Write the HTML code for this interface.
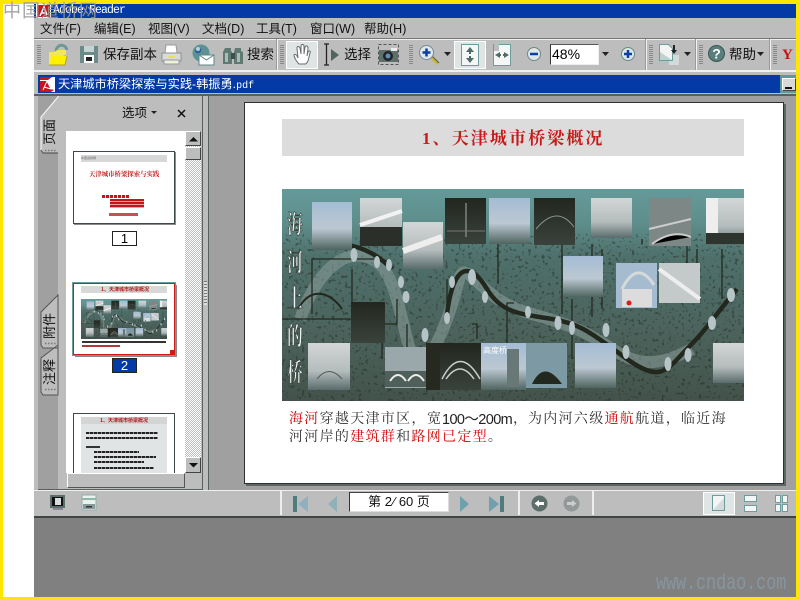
<!DOCTYPE html>
<html lang="zh"><head><meta charset="utf-8"><title>Adobe Reader</title>
<style>
html,body{margin:0;padding:0;width:800px;height:600px;overflow:hidden;background:#fff}
body{position:relative;font-family:"Liberation Sans","WenQuanYi Zen Hei","Noto Sans CJK SC",sans-serif;font-size:13px;color:#000}
div,span{position:absolute;white-space:nowrap;box-sizing:border-box}
.m{top:21px;font-size:12.5px;line-height:16px;color:#111}
.t{font-size:13.5px;line-height:16px;color:#111}
.g{width:4px;background:repeating-linear-gradient(#888 0 1px,#bdbdbd 1px 2px)}
.s{width:2px;background:#f2f2f2;border-left:1px solid #9a9a9a}
.b{background:#dfe4e4;border:1px solid #fff}
.c{font-family:"Liberation Serif","Noto Serif CJK SC",serif;font-size:14px;line-height:18px;letter-spacing:1.3px;color:#333}
.c b{font-weight:400;color:#d00000}
.v{left:42px;width:16px;writing-mode:vertical-rl;text-orientation:sideways;transform:rotate(180deg);font-size:13px;line-height:16px;color:#111}
svg{position:absolute;overflow:visible}
</style></head><body>
<!-- frame -->
<div style="left:34px;top:3px;width:763px;height:595px;background:#808080"></div>
<div style="left:34px;top:4px;width:762px;height:14px;background:#033aa5"></div>
<div style="left:34px;top:18px;width:762px;height:20px;background:#bdbdbd"></div>
<div style="left:34px;top:38px;width:762px;height:1px;background:#777"></div>
<div style="left:34px;top:39px;width:762px;height:1px;background:#eee"></div>
<div style="left:34px;top:40px;width:762px;height:30px;background:#bdbdbd"></div>
<div style="left:34px;top:70px;width:762px;height:2px;background:#f0f0f0"></div>
<div style="left:34px;top:72px;width:762px;height:24px;background:#bdbdbd"></div>
<div style="left:38px;top:75px;width:742px;height:18px;background:#033aa5"></div>
<div style="left:780px;top:75px;width:16px;height:18px;background:#5f9a9a"></div>
<div style="left:782px;top:78px;width:14px;height:13px;background:#d8d8d8;border:1px solid #fff;border-right-color:#444;border-bottom-color:#444"></div>
<div style="left:785px;top:87px;width:7px;height:2px;background:#111"></div>
<div style="left:34px;top:94px;width:762px;height:2px;background:#59615c"></div>
<!-- yellow edges -->
<div style="left:0;top:0;width:800px;height:4px;background:#ffe600"></div>
<div style="left:0;top:0;width:3px;height:600px;background:#ffe600"></div>
<div style="left:796px;top:0;width:4px;height:600px;background:#ffe600"></div>
<div style="left:0;top:597px;width:800px;height:3px;background:#ffe600"></div>
<!-- title -->
<svg style="left:36px;top:4px" width="15" height="14"><rect width="15" height="14" fill="#fff"/><path d="M1 1h13v12H1z" fill="#c8141e"/><path d="M4 12L8 3l3 8M5 9h5" stroke="#fff" stroke-width="1.5" fill="none"/></svg>
<div style="left:53px;top:3px;font:11.5px/16px 'Liberation Mono',monospace;color:#fff;letter-spacing:-.9px">Adobe Reader</div>
<div style="left:3px;top:0;font-size:18px;line-height:22px;color:#9a9a9a;letter-spacing:1px;opacity:.9">中国道桥网</div>
<!-- menu -->
<div class="m" style="left:40px">文件(F)</div><div class="m" style="left:94px">编辑(E)</div><div class="m" style="left:148px">视图(V)</div><div class="m" style="left:202px">文档(D)</div><div class="m" style="left:256px">工具(T)</div><div class="m" style="left:310px">窗口(W)</div><div class="m" style="left:364px">帮助(H)</div>
<!-- toolbar -->
<div class="g" style="left:37px;top:45px;height:19px"></div>
<div class="g" style="left:280px;top:45px;height:19px"></div>
<div class="g" style="left:409px;top:45px;height:19px"></div>
<div class="g" style="left:649px;top:45px;height:19px"></div>
<div class="g" style="left:699px;top:45px;height:19px"></div>
<div class="s" style="left:276px;top:39px;height:31px"></div>
<div class="s" style="left:645px;top:39px;height:31px"></div>
<div class="s" style="left:695px;top:39px;height:31px"></div>
<div class="s" style="left:769px;top:39px;height:31px"></div>
<!-- folder -->
<svg style="left:48px;top:43px" width="22" height="23"><path d="M8 8C9 1 17 0 19 7" stroke="#6f9797" stroke-width="3" fill="none"/><path d="M1 22V9h6l2-2h9v4L1 22z" fill="#f3e65a"/><path d="M1 22l3-9h15l-2 9z" fill="#fff000"/><path d="M1 22h16l2-9" fill="none" stroke="#b0a030"/></svg>
<!-- floppy -->
<svg style="left:80px;top:45px" width="19" height="19"><path d="M0 1h18v17H0z" fill="#6b8a8a"/><rect x="4" y="1" width="10" height="6" fill="#c6d3d3"/><rect x="4" y="10" width="10" height="8" fill="#fff"/><rect x="6" y="12" width="6" height="4" fill="#222"/></svg>
<div class="t" style="left:103px;top:47px">保存副本</div>
<!-- printer -->
<svg style="left:161px;top:44px" width="21" height="21"><path d="M5 1h10l1 8H4z" fill="#fff" stroke="#999"/><path d="M1 9h19v8H1z" fill="#d8dcdc" stroke="#8a9090"/><rect x="3" y="16" width="15" height="4" fill="#eee" stroke="#999"/><rect x="7" y="12" width="7" height="2" fill="#e8e060"/></svg>
<!-- globe mail -->
<svg style="left:192px;top:44px" width="22" height="22"><circle cx="9" cy="9" r="8.500" fill="#5c9292"/><path d="M3 6c3-4 7-2 6 1s-5 3-6 0z" fill="#2a5ca8"/><circle cx="6" cy="5" r="2" fill="#b8d2d2"/><path d="M7 11h15v10H7z" fill="#fff" stroke="#5d8a8a"/><path d="M7 11l7.500 5 7.500-5" fill="none" stroke="#5d8a8a"/></svg>
<!-- binoculars -->
<svg style="left:223px;top:45px" width="20" height="20"><path d="M2 3h6v3l1 1v12H0V7z" fill="#5f7a72"/><path d="M12 3h6v3l2 1v12H11V7z" fill="#5f7a72"/><rect x="8" y="8" width="4" height="6" fill="#3c4f49"/><rect x="2" y="8" width="3" height="9" fill="#a9bcb8"/><rect x="14" y="8" width="3" height="9" fill="#a9bcb8"/></svg>
<div class="t" style="left:247px;top:47px">搜索</div>
<!-- hand -->
<div class="b" style="left:286px;top:41px;width:32px;height:28px"></div>
<svg style="left:293px;top:44px" width="19" height="23"><path d="M6 20C3 17 1 13 1 11c0-1 2-1 3 1l1 2-1-10c0-2 2-2 3 0l1 6 0-8c0-2 3-2 3 0v8l1-7c1-2 3-1 3 1l-1 8 1-4c1-2 3-1 2 1l-2 8c-1 2-2 3-3 3z" fill="#fff" stroke="#6a6f6d"/></svg>
<!-- select -->
<svg style="left:322px;top:43px" width="20" height="24"><path d="M2 1h5M2 22h5M4.500 1v21" stroke="#222" stroke-width="1.300" fill="none"/><path d="M9 6l8 6-8 6z" fill="#4e6660"/></svg>
<div class="t" style="left:344px;top:47px">选择</div>
<!-- camera -->
<svg style="left:378px;top:44px" width="21" height="21"><rect x=".5" y=".5" width="20" height="20" fill="none" stroke="#555" stroke-dasharray="3 2"/><rect x="1" y="6" width="19" height="12" fill="#5b6f6c"/><rect x="13" y="4" width="6" height="3" fill="#eee"/><circle cx="10" cy="12" r="5" fill="#222"/><circle cx="10" cy="12" r="2.500" fill="#5f8fb8"/></svg>
<!-- zoom -->
<svg style="left:419px;top:45px" width="21" height="21"><path d="M11 11l8 8" stroke="#c8b830" stroke-width="3"/><path d="M11 11l8 8" stroke="#555" stroke-width="1" transform="translate(1 -1)"/><circle cx="7.500" cy="7.500" r="7" fill="#dfe8e8" stroke="#789"/><path d="M3.500 7.500h8M7.500 3.500v8" stroke="#0a3fa8" stroke-width="2.500"/></svg>
<svg style="left:444px;top:52px" width="7" height="5"><path d="M0 0h7L3.500 4z" fill="#222"/></svg>
<div class="b" style="left:454px;top:41px;width:32px;height:28px"></div>
<svg style="left:461px;top:44px" width="18" height="22"><path d="M.5.500h17v21H.5z" fill="#f5f7f7" stroke="#6e9c9c"/><path d="M9 3l-4 5h3v2h2V8h3zM9 19l-4-5h3v-2h2v2h3z" fill="#4f6d66"/></svg>
<svg style="left:493px;top:44px" width="18" height="22"><path d="M.5.500h17v21H.5z" fill="#f5f7f7" stroke="#6e9c9c"/><path d="M1 0h5v7H1z" fill="#bdbdbd"/><path d="M2 11l5-3v2h1v2H7v2zM16 11l-5-3v2h-1v2h1v2z" fill="#4f6d66"/></svg>
<svg style="left:527px;top:47px" width="14" height="14"><circle cx="7" cy="7" r="6.500" fill="#dfe6e6" stroke="#6b8a8a"/><path d="M3 7h8" stroke="#0a3fa8" stroke-width="2.500"/></svg>
<div style="left:550px;top:44px;width:49px;height:21px;background:#fff;border:1px solid;border-color:#555 #eee #eee #333;font:14px/19px 'Liberation Sans',sans-serif;padding-left:1px">48%</div>
<svg style="left:602px;top:52px" width="7" height="5"><path d="M0 0h7L3.500 4z" fill="#222"/></svg>
<svg style="left:621px;top:47px" width="14" height="14"><circle cx="7" cy="7" r="6.500" fill="#dfe6e6" stroke="#6b8a8a"/><path d="M3 7h8M7 3v8" stroke="#0a3fa8" stroke-width="2.500"/></svg>
<svg style="left:659px;top:44px" width="22" height="22"><rect x="10" y="11" width="10" height="10" fill="#d4d9d9"/><path d="M.5.500h9l4 4v12H.5z" fill="#f2f4f4" stroke="#6e9c9c"/><path d="M1 8l12 8H1z" fill="#c5cfcf"/><path d="M14 1h2v5h2l-3 4-3-4h2z" fill="#222"/></svg>
<svg style="left:684px;top:52px" width="7" height="5"><path d="M0 0h7L3.500 4z" fill="#222"/></svg>
<svg style="left:708px;top:45px" width="17" height="17"><circle cx="8.500" cy="8.500" r="8" fill="#587f7b" stroke="#3c5552"/><text x="8.500" y="13.500" text-anchor="middle" font-family="Liberation Sans" font-weight="700" font-size="14" fill="#fff">?</text></svg>
<div class="t" style="left:729px;top:47px">帮助</div>
<svg style="left:757px;top:52px" width="7" height="5"><path d="M0 0h7L3.500 4z" fill="#222"/></svg>
<div class="g" style="left:773px;top:45px;height:19px"></div>
<div style="left:782px;top:46px;font:700 15px/18px 'Liberation Serif',serif;color:#d01010">Y</div>
<!-- doc tab -->
<svg style="left:40px;top:77px" width="15" height="15"><rect width="15" height="15" fill="#fff"/><path d="M0 0h12l-4 3H0zM0 4h7l4 8 3 1-3 2H0z" fill="#c8141e"/><path d="M3 13L7 4l4 8-7-2" stroke="#fff" fill="none"/></svg>
<div style="left:58px;top:76px;color:#fff;font-size:12.2px;line-height:16px">天津城市桥梁探索与实践-韩振勇.<span style="position:static;font:10px/16px 'Liberation Mono',monospace">pdf</span></div>
<!-- left side -->
<div style="left:34px;top:96px;width:762px;height:394px;background:#bdbdbd"></div>
<div style="left:38px;top:96px;width:20px;height:394px;background:#a0a0a0"></div>
<div style="left:202px;top:96px;width:1px;height:394px;background:#59615c"></div>
<div style="left:38px;top:489px;width:165px;height:1px;background:#59615c"></div>
<div style="left:208px;top:96px;width:588px;height:394px;background:#a0a0a0;border-left:1px solid #59615c"></div>
<svg style="left:38px;top:96px" width="21" height="310">
<path d="M20 0v1L3 21v33l2 3h15" fill="#bdbdbd" stroke="#fff"/><path d="M3 54l2 3h15" stroke="#444" fill="none"/>
<path d="M20 199L3 216v33l2 3h15zM20 249L3 262v34l2 3h15z" fill="#bdbdbd" stroke="#555"/>
<path d="M7 54.500h12M7 247.500h12M7 293.500h12" stroke="#777" stroke-width="1.500" stroke-dasharray="1.500 1.500"/>
</svg>
<div class="v" style="top:119px;height:26px">页面</div>
<div class="v" style="top:312px;height:27px">附件</div>
<div class="v" style="top:358px;height:27px">注释</div>
<div class="t" style="left:122px;top:105px;font-size:12.5px">选项</div>
<svg style="left:151px;top:111px" width="6" height="4"><path d="M0 0h6L3 3z" fill="#222"/></svg>
<svg style="left:177px;top:109px" width="9" height="9"><path d="M1 1l7 7M8 1L1 8" stroke="#111" stroke-width="1.500"/></svg>
<!-- thumbs -->
<div style="left:66px;top:131px;width:119px;height:342px;background:#fff;overflow:hidden">
  <div style="left:7px;top:20px;width:102px;height:73px;background:#fff;border:1px solid #3d4a46;box-shadow:1px 1px 0 #8a8a8a">
    <div style="left:7px;top:3px;width:86px;height:7px;background:#d8d8d8;font-size:3px;line-height:7px;color:#666">中国道桥网</div>
    <div style="left:15px;top:17px;font:700 6.400px/9px 'Noto Serif CJK SC',serif;color:#c01818">天津城市桥梁探索与实践</div>
    <div style="left:28px;top:43px;width:27px;height:3px;background:repeating-linear-gradient(90deg,#c01818 0 3px,#fff 3px 4px)"></div>
    <div style="left:36px;top:47px;width:34px;height:9px;background:repeating-linear-gradient(#c01818 0 2px,#e9a0a0 2px 3px)"></div>
    <div style="left:35px;top:61px;width:29px;height:3px;background:#c85050"></div>
  </div>
  <div style="left:46px;top:100px;width:25px;height:15px;border:1px solid #222;text-align:center;font:13px/13px 'Liberation Sans',sans-serif">1</div>
  <div style="left:7px;top:152px;width:102px;height:72px;background:#fff;border:1px solid #d01818;outline:1px solid #6e9c9c;box-shadow:2px 2px 0 #8a8a8a">
    <div style="left:7px;top:2px;width:86px;height:7px;background:#d8d8d8"></div>
    <div style="left:27px;top:2px;font:700 5px/7px 'Noto Sans CJK SC',sans-serif;color:#b01818">1、天津城市桥梁概况</div>
    <svg style="left:7px;top:15px" width="86" height="40" viewBox="0 0 462 212" preserveAspectRatio="none"><use href="#bridge"/></svg>
    <div style="left:8px;top:57px;width:84px;height:2px;background:#333"></div>
    <div style="left:8px;top:61px;width:38px;height:2px;background:#b03838"></div>
    <div style="right:0;bottom:0;width:4px;height:4px;background:#d01818"></div>
  </div>
  <div style="left:46px;top:227px;width:25px;height:15px;border:1px solid #222;background:#033aa5;color:#fff;text-align:center;font:13px/13px 'Liberation Sans',sans-serif">2</div>
  <div style="left:7px;top:282px;width:102px;height:73px;background:#fff;border:1px solid #3d4a46">
    <div style="left:7px;top:3px;width:86px;height:60px;background:#e0e4e4"></div>
    <div style="left:7px;top:3px;width:86px;height:7px;background:#d4d4d4"></div>
    <div style="left:26px;top:3px;font:700 5px/7px 'Noto Sans CJK SC',sans-serif;color:#b01818">1、天津城市桥梁概况</div>
    <div style="left:12px;top:18px;width:72px;height:2px;background:repeating-linear-gradient(90deg,#222 0 3px,#888 3px 4px)"></div>
    <div style="left:12px;top:23px;width:72px;height:2px;background:repeating-linear-gradient(90deg,#222 0 3px,#888 3px 4px)"></div>
    <div style="left:12px;top:32px;width:14px;height:2px;background:#333"></div>
    <div style="left:20px;top:37px;width:45px;height:2px;background:repeating-linear-gradient(90deg,#222 0 3px,#888 3px 4px)"></div>
    <div style="left:20px;top:42px;width:62px;height:2px;background:repeating-linear-gradient(90deg,#222 0 3px,#888 3px 4px)"></div>
    <div style="left:20px;top:47px;width:50px;height:2px;background:repeating-linear-gradient(90deg,#222 0 3px,#888 3px 4px)"></div>
    <div style="left:20px;top:53px;width:60px;height:2px;background:repeating-linear-gradient(90deg,#222 0 3px,#888 3px 4px)"></div>
  </div>
</div>
<div style="left:67px;top:473px;width:118px;height:15px;background:#bdbdbd;border-top:1px solid #fff;border-left:1px solid #fff;border-right:1px solid #555;border-bottom:1px solid #555"></div>
<div style="left:185px;top:131px;width:16px;height:342px;background:#fff;background-image:repeating-conic-gradient(#bdbdbd 0 25%,#fff 0 50%);background-size:2px 2px"></div>
<div style="left:185px;top:131px;width:16px;height:15px;background:#bdbdbd;border:1px solid;border-color:#fff #444 #444 #fff"></div>
<svg style="left:189px;top:137px" width="9" height="5"><path d="M0 4.500L4.500 0 9 4.500z" fill="#111"/></svg>
<div style="left:185px;top:147px;width:16px;height:13px;background:#bdbdbd;border:1px solid;border-color:#fff #444 #444 #fff"></div>
<div style="left:185px;top:457px;width:16px;height:16px;background:#bdbdbd;border:1px solid;border-color:#fff #444 #444 #fff"></div>
<svg style="left:189px;top:463px" width="9" height="5"><path d="M0 0L4.500 4.500 9 0z" fill="#111"/></svg>
<div style="left:204px;top:281px;width:3px;height:24px;background:repeating-linear-gradient(#777 0 1px,#ddd 1px 3px)"></div>
<!-- page -->
<div style="left:244px;top:102px;width:540px;height:382px;background:#fff;border:1px solid #2c3230;box-shadow:2px 2px 0 #5e6663"></div>
<div style="left:282px;top:119px;width:462px;height:37px;background:#dcdcdc"></div>
<div style="left:422px;top:128px;font:700 17px/22px 'Liberation Serif','Noto Serif CJK SC',serif;color:#c81818;letter-spacing:2.1px">1、天津城市桥梁概况</div>
<svg style="left:282px;top:189px" width="462" height="212" viewBox="0 0 462 212">
<defs>
<filter id="n" x="0" y="0" width="100%" height="100%" color-interpolation-filters="sRGB"><feTurbulence type="fractalNoise" baseFrequency=".3" numOctaves="2" seed="4"/><feColorMatrix values="0 0 0 0 .14 0 0 0 0 .17 0 0 0 0 .14 10 0 0 0 -6.100"/></filter>
<filter id="h" x="-50%" y="-5%" width="200%" height="110%"><feGaussianBlur stdDeviation="2.500"/></filter>
<linearGradient id="bg" x1="0" y1="0" x2="0" y2="1"><stop offset="0" stop-color="#659a9a"/><stop offset=".16" stop-color="#5e8e8b"/><stop offset=".32" stop-color="#4f706b"/><stop offset=".7" stop-color="#4b625b"/><stop offset="1" stop-color="#43534b"/></linearGradient>
<linearGradient id="sky" x1="0" y1="0" x2="0" y2="1"><stop offset="0" stop-color="#a4bcd4"/><stop offset=".55" stop-color="#bcc8d2"/><stop offset="1" stop-color="#4f645f"/></linearGradient>
<linearGradient id="gr" x1="0" y1="0" x2="0" y2="1"><stop offset="0" stop-color="#d4d6d6"/><stop offset=".6" stop-color="#b4bcbc"/><stop offset="1" stop-color="#5a6c6c"/></linearGradient>
<linearGradient id="dk" x1="0" y1="0" x2="0" y2="1"><stop offset="0" stop-color="#22261f"/><stop offset="1" stop-color="#3a423c"/></linearGradient>
<g id="bridge">
<rect width="462" height="212" fill="url(#bg)"/>
<rect y="45" width="462" height="167" filter="url(#n)" opacity=".5"/>
<path d="M18 130C40 70 70 60 90 70S115 110 125 150 150 170 165 130 175 75 190 88 215 115 250 125 300 140 330 160 380 175 410 160 450 105" fill="none" stroke="#8d9f9b" stroke-width="12" opacity=".55"/>
<path d="M60 55C85 58 100 70 110 80M165 125C172 70 190 75 205 100S240 125 270 130 310 145 345 170 385 180 405 160 430 130 455 100" fill="none" stroke="#23281f" stroke-width="4.500"/>
<g stroke="#23281f" stroke-width="1.300" fill="none"><path d="M30 125V70H95M70 80V130H0M115 110V135H90M125 135V170M165 125V90M190 135H195V150M216 50V95M280 50V125M310 55V128M290 110V170M405 55V110M360 55V50M440 110V60M415 110V60M320 60V120M232 114H225V160M100 170V130"/></g>
<path d="M16 120C30 95 50 105 60 120" fill="none" stroke="#23281f" stroke-width="2"/>
<rect x="30" y="13" width="40" height="48" fill="url(#sky)"/>
<rect x="78" y="9" width="42" height="48" fill="url(#gr)"/><rect x="78" y="38" width="42" height="19" fill="#2a3029"/><path d="M78 36L120 22" stroke="#f2f2f2" stroke-width="4"/>
<rect x="121" y="33" width="40" height="47" fill="url(#gr)"/><path d="M121 62L160 48" stroke="#eee" stroke-width="6"/>
<rect x="163" y="9" width="41" height="46" fill="url(#dk)"/><path d="M184 14V48" stroke="#aaa"/><path d="M165 42H203" stroke="#777"/>
<rect x="207" y="9" width="41" height="46" fill="url(#sky)"/>
<rect x="252" y="9" width="41" height="47" fill="url(#dk)"/><path d="M254 40Q275 15 292 38" stroke="#8a9490" fill="none"/>
<rect x="309" y="9" width="41" height="40" fill="url(#gr)"/>
<rect x="367" y="9" width="42" height="48" fill="#7d8785"/><path d="M367 40L409 30M370 55Q390 40 409 48" stroke="#ccc" stroke-width="2"/>
<rect x="424" y="9" width="38" height="47" fill="url(#gr)"/><rect x="424" y="9" width="12" height="36" fill="#eee"/><rect x="424" y="44" width="38" height="11" fill="#2e342e"/>
<rect x="281" y="67" width="40" height="41" fill="url(#sky)"/>
<rect x="334" y="74" width="41" height="45" fill="#a5bcd0"/><path d="M340 100Q355 70 372 96" stroke="#d5d9d9" stroke-width="3" fill="none"/><rect x="340" y="100" width="30" height="18" fill="#dcdcdc"/>
<rect x="377" y="74" width="41" height="40" fill="#c4c9c9"/><path d="M377 80L418 110" stroke="#eee" stroke-width="4"/>
<circle cx="347" cy="114" r="2.500" fill="#e01818"/>
<rect x="69" y="113" width="34" height="41" fill="url(#dk)"/>
<rect x="26" y="154" width="42" height="47" fill="url(#gr)"/><path d="M35 190Q47 175 60 190" stroke="#555" fill="none"/>
<rect x="103" y="158" width="41" height="41" fill="#9aa8ac"/><rect x="103" y="182" width="41" height="16" fill="#4f5f5a"/><path d="M108 192Q116 180 124 192M126 192Q134 180 142 192" stroke="#eee" stroke-width="2" fill="none"/>
<rect x="144" y="154" width="14" height="47" fill="#25291f"/>
<rect x="158" y="154" width="41" height="47" fill="url(#dk)"/><path d="M160 190Q178 155 198 190M164 190Q178 170 192 190" stroke="#c9d0cc" stroke-width="1.500" fill="none"/>
<rect x="199" y="154" width="45" height="47" fill="url(#sky)"/><rect x="225" y="160" width="12" height="38" fill="#687876"/>
<rect x="244" y="154" width="41" height="45" fill="#7d9aa4"/><path d="M250 195Q262 170 280 195z" fill="#23281f"/>
<rect x="293" y="154" width="41" height="45" fill="url(#sky)"/>
<rect x="431" y="154" width="31" height="40" fill="url(#gr)"/>
<g fill="#b6c4c8"><ellipse cx="72" cy="66" rx="3.500" ry="7"/><ellipse cx="95" cy="73" rx="3" ry="6"/><ellipse cx="107" cy="76" rx="3" ry="6"/><ellipse cx="119" cy="93" rx="3" ry="6"/><ellipse cx="124" cy="108" rx="3.500" ry="6"/><ellipse cx="143" cy="146" rx="3.500" ry="7"/><ellipse cx="165" cy="129" rx="3" ry="6"/><ellipse cx="170" cy="93" rx="3" ry="6"/><ellipse cx="190" cy="88" rx="4" ry="8"/><ellipse cx="203" cy="108" rx="3" ry="6"/><ellipse cx="246" cy="123" rx="3" ry="6"/><ellipse cx="276" cy="134" rx="3.500" ry="7"/><ellipse cx="290" cy="139" rx="3" ry="7"/><ellipse cx="324" cy="141" rx="3.500" ry="7"/><ellipse cx="344" cy="163" rx="3.500" ry="7"/><ellipse cx="386" cy="175" rx="3.500" ry="7"/><ellipse cx="406" cy="166" rx="3.500" ry="7"/><ellipse cx="430" cy="134" rx="4" ry="7"/><ellipse cx="449" cy="106" rx="4" ry="7"/></g>
</g></defs>
<use href="#bridge"/>
<path d="M13 16V196" stroke="#9aa8a6" stroke-width="15" fill="none" opacity=".6" filter="url(#h)"/>
<g transform="translate(13 0) scale(.62 1)"><text font-family="Noto Serif CJK SC,serif" font-weight="700" font-size="25" fill="#f2f5f5" stroke="#39443f" stroke-width=".8" text-anchor="middle"><tspan x="0" y="44">海</tspan><tspan x="0" y="82">河</tspan><tspan x="0" y="118">上</tspan><tspan x="0" y="156">的</tspan><tspan x="0" y="192">桥</tspan></text></g>
<text x="201" y="164" font-family="WenQuanYi Zen Hei,sans-serif" font-size="8" fill="#fff">高度桥</text>
</svg>
<div class="c" style="left:289px;top:411px"><b>海河</b>穿越天津市区，</div>
<div class="c" style="left:427px;top:411px">宽</div>
<div style="left:442px;top:411px;font:14.5px/18px 'Liberation Sans','Noto Sans CJK SC',sans-serif;color:#222;letter-spacing:-.6px">100～200m</div>
<div class="c" style="left:513px;top:411px">，</div>
<div class="c" style="left:528px;top:411px">为内河六级<b>通航</b>航道，临近海</div>
<div class="c" style="left:289px;top:429px">河河岸的<b>建筑群</b>和<b>路网已定型</b>。</div>
<!-- status bar -->
<div style="left:34px;top:490px;width:762px;height:28px;background:#bdbdbd;border-top:1px solid #eee;border-bottom:2px solid #3f4441"></div>
<svg style="left:50px;top:495px" width="16" height="16"><rect width="15" height="13" fill="#5a6e6c"/><rect x="2" y="2" width="11" height="9" fill="#111"/><rect x="5" y="3" width="6" height="7" fill="#d8dede"/><rect x="3" y="13" width="10" height="2" fill="#889"/></svg>
<svg style="left:82px;top:495px" width="15" height="16"><rect width="14" height="15" fill="#eef0f0" stroke="#9aa"/><rect y="3" width="14" height="2" fill="#8ba"/><rect x="1" y="9" width="12" height="5" fill="#889a98"/><rect x="4" y="11" width="6" height="1.500" fill="#333"/></svg>
<div class="s" style="left:280px;top:491px;height:24px;background:#eee;border:0"></div>
<div class="s" style="left:518px;top:491px;height:24px;background:#eee;border:0"></div>
<div class="s" style="left:592px;top:491px;height:24px;background:#eee;border:0"></div>
<svg style="left:293px;top:496px" width="16" height="16"><rect width="4" height="16" fill="#4f7c7c"/><path d="M15 0v16L5 8z" fill="#8fb0c0"/></svg>
<svg style="left:328px;top:496px" width="10" height="16"><path d="M9 0v16L0 8z" fill="#8fb0b8"/></svg>
<div style="left:349px;top:492px;width:100px;height:20px;background:#fff;border:1px solid;border-color:#444 #ddd #ddd #333;text-align:center;font-size:13px;line-height:18px;color:#111">第 2&#8202;<span style="position:static;font-family:'Liberation Sans'">⁄</span> 60 页</div>
<svg style="left:460px;top:496px" width="10" height="16"><path d="M0 0v16L9 8z" fill="#6fa0ac"/></svg>
<svg style="left:489px;top:496px" width="16" height="16"><path d="M0 0v16L10 8z" fill="#6fa0ac"/><rect x="11" width="4" height="16" fill="#4f7c7c"/></svg>
<svg style="left:531px;top:495px" width="17" height="17"><circle cx="8.500" cy="8.500" r="8" fill="#5d6e6a"/><path d="M3.500 8.500L8 5v2h5v3H8v2z" fill="#fff"/></svg>
<svg style="left:563px;top:495px" width="17" height="17"><circle cx="8.500" cy="8.500" r="8" fill="#939898"/><path d="M13.500 8.500L9 5v2H4v3h5v2z" fill="#ccc"/></svg>
<div class="b" style="left:703px;top:492px;width:32px;height:23px"></div>
<svg style="left:712px;top:495px" width="14" height="17"><path d="M.5.500h12v15H.5z" fill="#f4f6f6" stroke="#6e9c9c"/><path d="M1 15L12 3v12z" fill="#d5dbdb"/></svg>
<svg style="left:744px;top:495px" width="14" height="17"><path d="M.5.500h12v6H.5zM.5 10.500h12v6H.5z" fill="#f4f6f6" stroke="#6e9c9c"/></svg>
<svg style="left:775px;top:495px" width="14" height="17"><path d="M.5.500h5v7h-5zM7.500.500h5v7h-5zM.5 9.500h5v7h-5zM7.500 9.500h5v7h-5z" fill="#f4f6f6" stroke="#6e9c9c"/></svg>
<div style="left:656px;top:573px;font:22px/22px 'Liberation Mono',monospace;color:#86959e;transform:scaleX(.77);transform-origin:0 0;letter-spacing:-.2px">www.cndao.com</div>
</body></html>
